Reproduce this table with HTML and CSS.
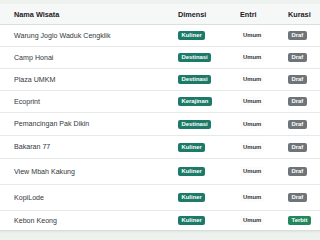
FILE: index.html
```
<!DOCTYPE html>
<html lang="id">
<head>
<meta charset="utf-8">
<link rel="stylesheet" href="styles.css">
</head>
<body>
<div class="page">
  <div class="card">
    <div class="row head">
      <div class="c name">Nama Wisata</div>
      <div class="c">Dimensi</div>
      <div class="c">Entri</div>
      <div class="c">Kurasi</div>
    </div>
    <div class="row"><div class="c name">Warung Joglo Waduk Cengklik</div><div class="c"><span class="badge teal">Kuliner</span></div><div class="c"><span class="badge light">Umum</span></div><div class="c"><span class="badge gray">Draf</span></div></div>
    <div class="row"><div class="c name">Camp Honai</div><div class="c"><span class="badge teal">Destinasi</span></div><div class="c"><span class="badge light">Umum</span></div><div class="c"><span class="badge gray">Draf</span></div></div>
    <div class="row"><div class="c name">Plaza UMKM</div><div class="c"><span class="badge teal">Destinasi</span></div><div class="c"><span class="badge light">Umum</span></div><div class="c"><span class="badge gray">Draf</span></div></div>
    <div class="row"><div class="c name">Ecoprint</div><div class="c"><span class="badge teal">Kerajinan</span></div><div class="c"><span class="badge light">Umum</span></div><div class="c"><span class="badge gray">Draf</span></div></div>
    <div class="row"><div class="c name">Pemancingan Pak Dikin</div><div class="c"><span class="badge teal">Destinasi</span></div><div class="c"><span class="badge light">Umum</span></div><div class="c"><span class="badge gray">Draf</span></div></div>
    <div class="row"><div class="c name">Bakaran 77</div><div class="c"><span class="badge teal">Kuliner</span></div><div class="c"><span class="badge light">Umum</span></div><div class="c"><span class="badge gray">Draf</span></div></div>
    <div class="row"><div class="c name">View Mbah Kakung</div><div class="c"><span class="badge teal">Kuliner</span></div><div class="c"><span class="badge light">Umum</span></div><div class="c"><span class="badge gray">Draf</span></div></div>
    <div class="row"><div class="c name">KopiLode</div><div class="c"><span class="badge teal">Kuliner</span></div><div class="c"><span class="badge light">Umum</span></div><div class="c"><span class="badge gray">Draf</span></div></div>
    <div class="row"><div class="c name">Kebon Keong</div><div class="c"><span class="badge teal">Kuliner</span></div><div class="c"><span class="badge light">Umum</span></div><div class="c"><span class="badge green">Terbit</span></div></div>
  </div>
</div>
</body>
</html>
```
FILE: styles.css
```
html, body {
  margin: 0;
  padding: 0;
  background: #eef2ef;
  font-family: "Liberation Sans", Arial, sans-serif;
  color: #33373b;
}
.page {
  width: 320px;
  height: 240px;
  overflow: hidden;
  padding-top: 4px;
  box-sizing: border-box;
}
.card {
  background: #fff;
  border-bottom: 1px solid #d9dedb;
  box-shadow: 0 1px 2px rgba(0,0,0,0.06);
}
.row {
  display: grid;
  grid-template-columns: 172px 62px 48px 38px;
  align-items: center;
  height: 21px;
  border-bottom: 1px solid #e6e9e8;
  font-size: 7.1px;
}
.row:nth-child(n+6) { height: 22px; }
.row:nth-child(n+8) { height: 25px; }
.row:last-child { height: 19px; border-bottom: 0; }
.head {
  background: #f6f7f7;
  font-weight: bold;
  color: #1d2125;
  height: 20px;
  font-size: 7.3px;
  border-bottom: 1px solid #dadfdd;
}
.c {
  padding-left: 6px;
  white-space: nowrap;
}
.c.name { padding-left: 14px; }
.badge {
  display: inline-block;
  font-size: 5.9px;
  font-weight: bold;
  line-height: 9px;
  height: 9px;
  padding: 0 3.5px;
  border-radius: 2px;
  color: #fff;
  vertical-align: middle;
}
.teal { background: #1d7a68; }
.gray { background: #6f7478; }
.green { background: #23875c; }
.light { background: #fafbfa; color: #333; padding: 0 3px; }
```
